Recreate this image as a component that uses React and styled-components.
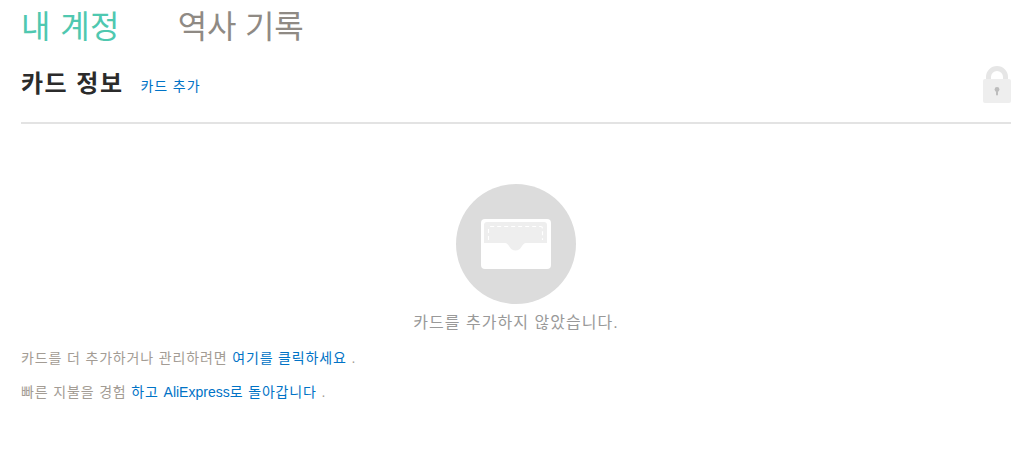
import React from 'react'
import styled, { createGlobalStyle } from 'styled-components'

const GlobalStyle = createGlobalStyle`
  html, body {
    margin: 0;
    padding: 0;
    background: #fff;
    font-family: "Liberation Sans", "Noto Sans CJK KR", sans-serif;
  }
`

const Page = styled.div`
  padding: 0 14px 0 21px;
  height: 449px;
  box-sizing: border-box;
  overflow: hidden;
`

const Tabs = styled.div`
  display: flex;
  gap: 58px;
  height: 54px;
  align-items: center;
`

const Tab = styled.a`
  font-size: 32px;
  line-height: 54px;
  letter-spacing: ${({ $active }) => ($active ? '0.4px' : '-0.2px')};
  color: ${({ $active }) => ($active ? '#4fc8b0' : '#8f8a84')};
`

const CardHeader = styled.div`
  display: flex;
  align-items: center;
  justify-content: space-between;
  height: 68px;
  border-bottom: 2px solid #e3e3e3;
  box-sizing: content-box;
`

const HeaderLeft = styled.div`
  display: flex;
  align-items: center;
  gap: 17px;
  margin-top: -14px;
`

const CardTitle = styled.h2`
  margin: 0;
  font-size: 24px;
  font-weight: 700;
  letter-spacing: 1.5px;
  color: #2b2b2b;
`

const AddLink = styled.a`
  margin-top: 8px;
  font-size: 14px;
  letter-spacing: 0.9px;
  color: #0073c6;
`

const LockIcon = styled.svg`
  width: 30px;
  height: 38px;
  margin: -6px -1px 0 0;
`

const Empty = styled.div`
  display: flex;
  flex-direction: column;
  align-items: center;
  padding-top: 60px;
`

const EmptyIcon = styled.svg`
  width: 120px;
  height: 120px;
`

const EmptyText = styled.p`
  margin: 7px 0 0;
  font-size: 16px;
  line-height: 24px;
  letter-spacing: 1.05px;
  color: #999;
`

const Note = styled.p`
  margin: ${({ $first }) => ($first ? '13px' : '14px')} 0 0;
  font-size: 14px;
  line-height: 20px;
  letter-spacing: 0.85px;
  color: #a39c94;
`

const NoteLink = styled.a`
  color: #0073c6;
`

const Latin = styled.span`
  letter-spacing: 0;
`

export default function App() {
  return (
    <Page>
      <GlobalStyle />
      <Tabs>
        <Tab $active>내 계정</Tab>
        <Tab>역사 기록</Tab>
      </Tabs>
      <CardHeader>
        <HeaderLeft>
          <CardTitle>카드 정보</CardTitle>
          <AddLink>카드 추가</AddLink>
        </HeaderLeft>
        <LockIcon viewBox="0 0 30 38">
          <path d="M6.500 17V11a8.500 8.500 0 0 1 17 0v6" fill="none" stroke="#e6e6e6" strokeWidth="5" />
          <rect x="1" y="13" width="28" height="24" rx="2" fill="#eeeeee" />
          <circle cx="15" cy="23.500" r="2.400" fill="#bdbdbd" />
          <rect x="14" y="24" width="2" height="5.500" rx="1" fill="#bdbdbd" />
        </LockIcon>
      </CardHeader>
      <Empty>
        <EmptyIcon viewBox="0 0 120 120">
          <circle cx="60" cy="60" r="60" fill="#dcdcdc" />
          <rect x="25" y="35" width="70" height="50" rx="4" fill="#fff" />
          <path d="M28 59V41a3 3 0 0 1 3-3h57a3 3 0 0 1 3 3v18H70c-2 0-3 1.500-4 3-3 6-10 6-13 0-1-1.500-2-3-4-3Z" fill="#eeeeee" />
          <path d="M32.500 56V44.500a2 2 0 0 1 2-2h50a2 2 0 0 1 2 2V56" fill="none" stroke="#fff" strokeWidth="1.200" strokeDasharray="4 3" />
        </EmptyIcon>
        <EmptyText>카드를 추가하지 않았습니다.</EmptyText>
      </Empty>
      <Note $first>
        카드를 더 추가하거나 관리하려면 <NoteLink>여기를 클릭하세요</NoteLink> .
      </Note>
      <Note>
        빠른 지불을 경험 <NoteLink>하고 <Latin>AliExpress</Latin>로 돌아갑니다</NoteLink> .
      </Note>
    </Page>
  )
}
